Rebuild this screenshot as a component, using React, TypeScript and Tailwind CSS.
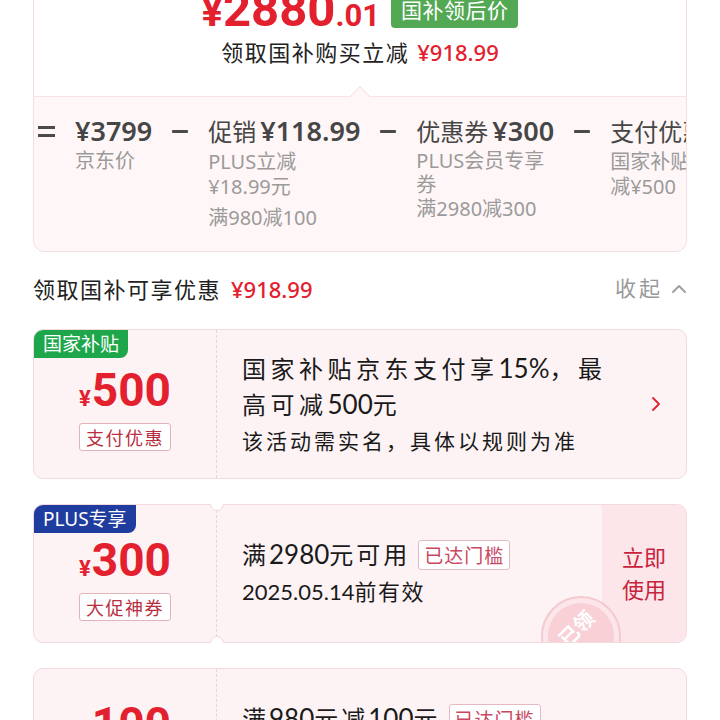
import React from "react";

const CARD = "font-['Noto_Sans_CJK_SC',sans-serif]";
const NUM = "font-['Lato','Noto_Sans',sans-serif] tracking-normal";

function Minus() {
  return (
    <div className="h-[34px] w-[16px] flex items-center shrink-0">
      <div className="w-[16px] h-[3px] bg-[#4a4a4a] rounded-[1px]" />
    </div>
  );
}

function Coupon({
  h,
  tag,
  tagColor,
  amount,
  label,
  children,
  button,
  chevron,
  notches,
  stamp,
}: {
  h: string;
  tag?: string;
  tagColor?: string;
  amount: string;
  label: string;
  children: React.ReactNode;
  button?: boolean;
  chevron?: boolean;
  notches?: boolean;
  stamp?: boolean;
}) {
  return (
    <div className={`relative shrink-0 ${h}`}>
      <div className="relative flex h-full rounded-[10px] border border-[#f3dade] bg-[#fdf3f4] overflow-hidden">
        {tag && (
          <div
            className={`absolute left-0 top-0 h-[28px] px-[9px] text-white text-[19px] leading-[28px] rounded-br-[8px] font-['Noto_Sans','Noto_Sans_CJK_SC',sans-serif] ${tagColor}`}
          >
            {tag}
          </div>
        )}
        <div className="w-[183px] shrink-0 border-r border-dashed border-[#ecd2d6] flex flex-col items-center justify-center pt-[10px]">
          <div className="flex items-baseline text-[#e3202e] font-bold font-['Roboto',sans-serif]">
            <span className="text-[22px] mr-[1px]">¥</span>
            <span className="text-[46px] leading-[46px]">{amount}</span>
          </div>
          <div
            className={`mt-[8px] h-[28px] px-[6px] border border-[#e2b3b9] bg-white rounded-[3px] text-[18px] leading-[26px] text-[#b8303f] tracking-[1.5px] ${CARD}`}
          >
            {label}
          </div>
        </div>
        <div className="flex-1 flex items-center pl-[25px]">{children}</div>
        {chevron && (
          <div className="w-[60px] flex items-center justify-center shrink-0">
            <svg width="10" height="16" viewBox="0 0 10 16" fill="none">
              <path d="M2 2 L8 8 L2 14" stroke="#e3202e" strokeWidth="1.8" strokeLinecap="round" strokeLinejoin="round" />
            </svg>
          </div>
        )}
        {button && (
          <div className={`w-[84px] shrink-0 bg-[#fde6ea] flex items-center justify-center pb-[4px] text-[22px] leading-[32px] text-[#c8233c] ${CARD}`}>
            <div className="text-center">
              立即
              <br />
              使用
            </div>
          </div>
        )}
        {stamp && (
          <div className="absolute left-[507px] top-[91px] w-[80px] h-[80px] rounded-full border-[2px] border-[#f4c9d0] bg-[#fce6e9] flex items-center justify-center">
            <div className="relative w-[66px] h-[66px] rounded-full bg-[#f8d0d6]">
              <span className="absolute left-[8px] top-[10px] -rotate-[45deg] text-white text-[20px] font-bold font-['Noto_Sans_CJK_SC',sans-serif]">
                已领
              </span>
            </div>
          </div>
        )}
      </div>
      {notches && (
        <>
          <div className="absolute left-[177px] -top-[7px] w-[14px] h-[14px] rounded-full bg-white border border-[#f3dade] border-t-transparent border-r-transparent -rotate-45" />
          <div className="absolute left-[177px] -bottom-[7px] w-[14px] h-[14px] rounded-full bg-white border border-[#f3dade] border-b-transparent border-l-transparent -rotate-45" />
        </>
      )}
    </div>
  );
}

function ThresholdBox() {
  return (
    <div className={`ml-[8px] h-[30px] px-[5px] border border-[#e6bac3] bg-white rounded-[3px] text-[19px] leading-[28px] text-[#c9475f] tracking-[1px] ${CARD}`}>
      已达门槛
    </div>
  );
}

export default function App() {
  return (
    <div className="w-[720px] h-[720px] overflow-hidden bg-white font-['Noto_Sans','Noto_Sans_CJK_SC',sans-serif] text-[#222]">
      {/* top summary card */}
      <div className="mx-[33px] border-x border-b border-[#f3dfe2] rounded-b-[12px] overflow-hidden">
        <div className="relative h-[96px] bg-white flex flex-col items-center">
          <div className="h-[33px] flex items-end gap-[11px]">
            <div className="text-[49px] leading-[40px] -mb-[3px] text-[#e3202e] font-bold font-['Roboto',sans-serif] whitespace-nowrap">
              <span className="text-[40px]">¥</span>
              <span>2880</span>
              <span className="text-[31px]">.01</span>
            </div>
            <div className="mb-[5px] h-[36px] px-[10px] bg-[#52a853] rounded-b-[4px] text-white text-[21px] leading-[34px] tracking-[0.5px] font-['Noto_Sans_CJK_SC',sans-serif]">
              国补领后价
            </div>
          </div>
          <div className="mt-[4px] text-[22px] leading-[30px] whitespace-nowrap">
            <span className="tracking-[1.5px] text-[#222]">领取国补购买立减</span>
            <span className="ml-[8px] text-[#e3202e] font-medium">¥918.99</span>
          </div>
          <div className="absolute left-[319px] -bottom-[7px] w-[14px] h-[14px] rotate-45 bg-[#fff6f7] border-l border-t border-[#f7e2e5] z-10" />
        </div>
        <div className="h-[155px] border-t border-[#f7e2e5] bg-[#fff6f7] pt-[17px] pl-[4px] flex items-start gap-[20px] whitespace-nowrap overflow-hidden text-[#464646]">
          <div className="h-[34px] w-[17px] flex flex-col justify-center gap-[5px] shrink-0">
            <div className="w-[17px] h-[3px] bg-[#4a4a4a]" />
            <div className="w-[17px] h-[3px] bg-[#4a4a4a]" />
          </div>
          <div className="shrink-0">
            <div className="text-[27px] leading-[34px] font-semibold">¥3799</div>
            <div className="text-[20px] leading-[25px] text-[#9a9a9a]">京东价</div>
          </div>
          <Minus />
          <div className="shrink-0">
            <div className="flex items-baseline leading-[34px]">
              <span className="text-[24px]">促销</span>
              <span className="ml-[4px] text-[27px] font-semibold">¥118.99</span>
            </div>
            <div className="text-[20px] leading-[25px] text-[#9a9a9a]">
              PLUS立减
              <br />
              ¥18.99元
            </div>
            <div className="mt-[6px] text-[20px] leading-[25px] text-[#9a9a9a]">满980减100</div>
          </div>
          <Minus />
          <div className="shrink-0">
            <div className="flex items-baseline leading-[34px]">
              <span className="text-[24px]">优惠券</span>
              <span className="ml-[4px] text-[27px] font-semibold">¥300</span>
            </div>
            <div className="text-[20px] leading-[24px] text-[#9a9a9a]">
              PLUS会员专享
              <br />
              券
              <br />
              满2980减300
            </div>
          </div>
          <Minus />
          <div className="shrink-0">
            <div className="flex items-baseline leading-[34px]">
              <span className="text-[24px]">支付优惠</span>
              <span className="ml-[4px] text-[27px] font-semibold">¥500</span>
            </div>
            <div className="text-[20px] leading-[25px] text-[#9a9a9a]">
              国家补贴立
              <br />
              减¥500
            </div>
          </div>
        </div>
      </div>

      {/* section header */}
      <div className="mt-[22px] px-[33px] h-[30px] flex items-center justify-between">
        <div className="text-[22px] leading-[30px] whitespace-nowrap">
          <span className="tracking-[1.5px]">领取国补可享优惠</span>
          <span className="ml-[10px] text-[#e3202e] font-medium">¥918.99</span>
        </div>
        <div className="flex items-center gap-[8px] text-[#999] text-[21px]">
          <span className="tracking-[3px]">收起</span>
          <svg width="16" height="10" viewBox="0 0 16 10" fill="none">
            <path d="M2 8 L8 2 L14 8" stroke="#a0a0a0" strokeWidth="2" strokeLinecap="round" strokeLinejoin="round" />
          </svg>
        </div>
      </div>

      {/* coupons */}
      <div className="mt-[25px] px-[33px] flex flex-col gap-[25px]">
        <Coupon h="h-[150px]" tag="国家补贴" tagColor="bg-[#1ea64b]" amount="500" label="支付优惠" chevron>
          <div className={`text-[#1a1a1a] ${CARD}`}>
            <div className="text-[24px] leading-[35px] tracking-[4.5px] whitespace-nowrap">
              国家补贴京东支付享<span className={`${NUM} text-[26px]`}>15%</span>，最
              <br />
              高可减<span className={`${NUM} text-[26px]`}>500</span>元
            </div>
            <div className="text-[21px] leading-[36px] tracking-[3px] whitespace-nowrap">该活动需实名，具体以规则为准</div>
          </div>
        </Coupon>
        <Coupon h="h-[139px]" tag="PLUS专享" tagColor="bg-[#1f3d9e]" amount="300" label="大促神券" button notches stamp>
          <div className={`text-[#1a1a1a] ${CARD}`}>
            <div className="h-[34px] flex items-center whitespace-nowrap">
              <span className="text-[24px] tracking-[3px]">
                满<span className={`${NUM} text-[26px]`}>2980</span>元可用
              </span>
              <ThresholdBox />
            </div>
            <div className="text-[22px] leading-[36px] tracking-[1.5px] whitespace-nowrap">
              <span className={NUM}>2025.05.14</span>前有效
            </div>
          </div>
        </Coupon>
        <Coupon h="h-[139px]" amount="100" label="店铺神券">
          <div className={`text-[#1a1a1a] ${CARD}`}>
            <div className="h-[34px] flex items-center whitespace-nowrap">
              <span className="text-[24px] tracking-[3px]">
                满<span className={`${NUM} text-[26px]`}>980</span>元减<span className={`${NUM} text-[26px]`}>100</span>元
              </span>
              <ThresholdBox />
            </div>
            <div className="text-[22px] leading-[36px] tracking-[1.5px] whitespace-nowrap">
              <span className={NUM}>2025.05.14</span>前有效
            </div>
          </div>
        </Coupon>
      </div>
    </div>
  );
}
